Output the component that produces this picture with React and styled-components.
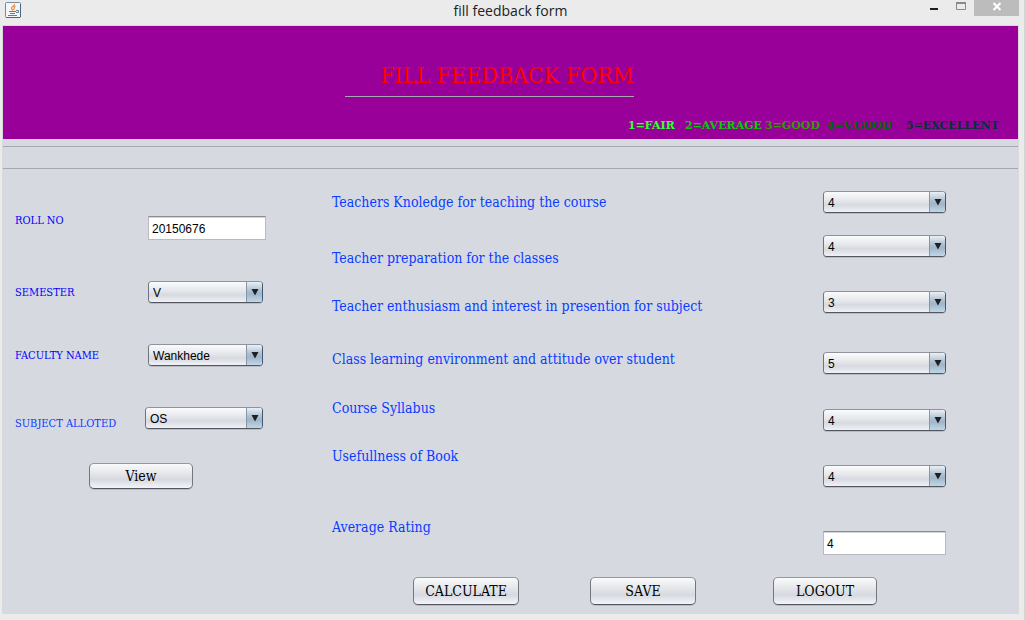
import React from "react";
import styled, { createGlobalStyle } from "styled-components";

const slab = '"DejaVu Serif Condensed", "DejaVu Serif", serif';
const wideSlab = '"DejaVu Serif", serif';
const sans = '"Liberation Sans", Arial, sans-serif';

const GlobalStyle = createGlobalStyle`
  *, *::before, *::after { box-sizing: border-box; }
  body { margin: 0; background: #ebebeb; font-family: ${sans}; }
`;

const Frame = styled.div`
  display: flex;
  flex-direction: column;
  min-height: 100vh;
  padding: 0 5px 6px 2px;
  border-right: 2px solid #d4d4d4;
  background: #ebebeb;
`;

const TitleBar = styled.header`
  display: grid;
  grid-template-columns: 1fr auto 1fr;
  height: 25px;
`;

const AppIcon = styled.svg`
  width: 16px;
  height: 16px;
  margin: 2px 0 0 3px;
`;

const WindowTitle = styled.div`
  font: 14px/22px "Open Sans", "Noto Sans", sans-serif;
  color: #222;
`;

const WindowControls = styled.div`
  display: flex;
  justify-content: flex-end;
  height: 16px;
`;

const WindowButton = styled.button`
  display: block;
  width: ${(p) => (p.$close ? 45 : 27)}px;
  height: 16px;
  padding: 0;
  border: 0;
  background: ${(p) => (p.$close ? "#bcbcbc" : "transparent")};
  svg { display: block; margin: 0 auto; }
`;

const Content = styled.main`
  flex: 1;
  display: flex;
  flex-direction: column;
  border: 1px solid #d9d9dc;
  border-bottom: 0;
  background: #d6d9e0;
`;

const Banner = styled.section`
  display: flex;
  flex-direction: column;
  justify-content: space-between;
  height: 113px;
  padding: 36px 0 6px;
  background: #990099;
`;

const HeadingRow = styled.div`
  display: grid;
  grid-template-columns: 342fr 289fr 384fr;
`;

const Heading = styled.h1`
  grid-column: 2;
  margin: 0;
  padding-bottom: 8px;
  border-bottom: 1px solid #a4a8b0;
  font: 23px/26px ${slab};
  color: #ff0000;
  text-align: right;
  white-space: nowrap;
`;

const Legend = styled.div`
  display: grid;
  grid-template-columns: 57px 80px 62px 79px 92px;
  justify-content: end;
  padding-right: 20px;
`;

const LegendItem = styled.span`
  font: bold 11px/14px ${wideSlab};
  color: ${(p) => p.$color};
  white-space: nowrap;
`;

const Strip = styled.div`
  height: 23px;
  margin-top: 7px;
  border: solid #a4a8b2;
  border-width: 1px 0;
`;

const Form = styled.form`
  display: grid;
  grid-template-columns: 329fr 491fr 195fr;
  padding-bottom: 9px;
`;

const StudentPanel = styled.section`
  display: grid;
  grid-template-columns: 133fr 184fr;
  align-content: start;
  padding-left: 12px;
`;

const Column = styled.div`
  display: flex;
  flex-direction: column;
  align-items: flex-start;
  padding-top: ${(p) => p.$top}px;
`;

const Label = styled.label`
  margin-bottom: ${(p) => p.$gap || 0}px;
  font: ${(p) => (p.$small ? "11px" : "14px")}/20px ${slab};
  color: ${(p) => (p.$light ? "#0a3cff" : "#0000ff")};
  white-space: nowrap;
`;

const Field = styled.input`
  width: ${(p) => p.$width}px;
  height: 24px;
  margin-bottom: ${(p) => p.$gap || 0}px;
  padding: 1px 3px 0;
  border: 1px solid #b8babf;
  border-top-color: #8b8d92;
  background: #fff;
  box-shadow: inset 0 1px 0 #d4d5d8;
  font: 12px ${sans};
  color: #000;
`;

const ComboBox = styled.span`
  position: relative;
  display: block;
  width: ${(p) => p.$width}px;
  height: 22px;
  margin-bottom: ${(p) => p.$gap || 0}px;
  margin-left: ${(p) => (p.$outdent ? -3 : 0)}px;
  border: 1px solid #6f747c;
  border-top-color: #8f939b;
  border-right-color: #3f5a72;
  border-bottom-color: #51565f;
  border-radius: 4px;
  box-shadow: 0 1px 0 #b9bcc3;
  overflow: hidden;

  select {
    appearance: none;
    display: block;
    width: 100%;
    height: 100%;
    padding: 2px 20px 0 4px;
    border: 0;
    background: linear-gradient(#fbfbfc, #e4e6ea 45%, #d6d9df 65%, #f0f2f8);
    font: 12px ${sans};
    color: #000;
  }
`;

const Arrow = styled.span`
  position: absolute;
  inset: 0 0 0 auto;
  width: 16px;
  border-left: 1px solid #8397a9;
  background: linear-gradient(#eaf0f5, #abbdce 45%, #a2b5c8 60%, #bfd7ea);
  pointer-events: none;
  svg { display: block; margin: 6px 0 0 4px; }
`;

const Button = styled.button`
  width: ${(p) => p.$width}px;
  height: ${(p) => p.$height || 28}px;
  padding: 0;
  border: 1px solid #74777e;
  border-top-color: #95989f;
  border-bottom-color: #53565d;
  border-radius: 5px;
  background: linear-gradient(#fafafb, #e4e6e9 40%, #d6d9df 65%, #f3f5fb);
  box-shadow: 0 1px 0 #b9bcc3;
  font: 14px ${slab};
  color: #000;
`;

const ViewRow = styled.div`
  grid-column: 1 / -1;
  padding: 29px 0 0 74px;
`;

const Actions = styled.div`
  grid-column: 1 / -1;
  display: grid;
  grid-template-columns: 177fr 183fr 245fr;
  padding: 22px 0 0 40.4%;
`;

const JavaIcon = () => (
  <AppIcon viewBox="0 0 16 16" aria-label="Java">
    <rect x="0.5" y="0.5" width="15" height="15" rx="1" fill="#f4f5f7" stroke="#6f8da5" />
    <path d="M1 15.5h14M15.5 2v13" stroke="#47657c" fill="none" />
    <path d="M9.5 2C10 4 6 5 6.5 6.500S8 7.500 7.500 8.500M10.500 4C8 5.500 10 6 8.500 8" stroke="#ee8434" strokeWidth="1.200" fill="none" />
    <path d="M4 9.500h7M5 11.500h5M3 13.500h9M11 8.500h2.500v2H11" stroke="#5f7f99" fill="none" />
  </AppIcon>
);

function Combo({ id, value, options, width, gap, outdent }) {
  return (
    <ComboBox $width={width} $gap={gap} $outdent={outdent}>
      <select id={id} defaultValue={value}>
        {options.map((o) => <option key={o}>{o}</option>)}
      </select>
      <Arrow>
        <svg width="8" height="8" viewBox="0 0 8 8"><path d="M0.500 1h7L4 7.500z" fill="#1d2024" /></svg>
      </Arrow>
    </ComboBox>
  );
}

const legend = [
  ["1=FAIR", "#33ff33"],
  ["2=AVERAGE", "#00cc00"],
  ["3=GOOD", "#339900"],
  ["4=V.GOOD", "#006600"],
  ["5=EXCELLENT", "#003333"],
];

const questions = [
  { id: "q1", text: "Teachers Knoledge for teaching the course", gap: 36, value: "4", controlGap: 22 },
  { id: "q2", text: "Teacher preparation for the classes", gap: 28, value: "4", controlGap: 34 },
  { id: "q3", text: "Teacher enthusiasm and interest in presention for subject", gap: 33, value: "3", controlGap: 39 },
  { id: "q4", text: "Class learning environment and attitude over student", gap: 29, value: "5", controlGap: 35 },
  { id: "q5", text: "Course Syllabus", gap: 28, value: "4", controlGap: 34 },
  { id: "q6", text: "Usefullness of Book", gap: 51, value: "4", controlGap: 44 },
];

const ratings = ["1", "2", "3", "4", "5"];

export default function App() {
  return (
    <>
      <GlobalStyle />
      <Frame>
        <TitleBar>
          <JavaIcon />
          <WindowTitle>fill feedback form</WindowTitle>
          <WindowControls>
            <WindowButton aria-label="Minimize">
              <svg width="8" height="16"><path d="M0 9h8" stroke="#1c1c1c" strokeWidth="2" /></svg>
            </WindowButton>
            <WindowButton aria-label="Maximize">
              <svg width="10" height="16"><path d="M0.500 2.500v7h9v-7" stroke="#8a8a8a" fill="none" /><path d="M0 3h10" stroke="#8a8a8a" strokeWidth="2" /></svg>
            </WindowButton>
            <WindowButton $close aria-label="Close">
              <svg width="8" height="16"><path d="M0.500 3l7 7M7.500 3l-7 7" stroke="#fff" strokeWidth="2" /></svg>
            </WindowButton>
          </WindowControls>
        </TitleBar>
        <Content>
          <Banner>
            <HeadingRow><Heading>FILL FEEDBACK FORM</Heading></HeadingRow>
            <Legend>
              {legend.map(([text, color]) => <LegendItem key={text} $color={color}>{text}</LegendItem>)}
            </Legend>
          </Banner>
          <Strip />
          <Form onSubmit={(e) => e.preventDefault()}>
            <StudentPanel>
              <Column $top={42}>
                <Label $small htmlFor="roll" $gap={52}>ROLL NO</Label>
                <Label $small htmlFor="semester" $gap={43}>SEMESTER</Label>
                <Label $small htmlFor="faculty" $gap={48}>FACULTY NAME</Label>
                <Label $small $light htmlFor="subject">SUBJECT ALLOTED</Label>
              </Column>
              <Column $top={47}>
                <Field id="roll" defaultValue="20150676" $width={118} $gap={41} />
                <Combo id="semester" value="V" options={["I", "II", "III", "IV", "V", "VI"]} width={115} gap={41} />
                <Combo id="faculty" value="Wankhede" options={["Wankhede"]} width={115} gap={41} />
                <Combo id="subject" value="OS" options={["OS"]} width={118} outdent />
              </Column>
              <ViewRow><Button type="button" $width={104} $height={26}>View</Button></ViewRow>
            </StudentPanel>
            <Column $top={23}>
              {questions.map((q) => (
                <Label key={q.id} htmlFor={q.id} $light $gap={q.gap}>{q.text}</Label>
              ))}
              <Label htmlFor="average" $light>Average Rating</Label>
            </Column>
            <Column $top={22}>
              {questions.map((q) => (
                <Combo key={q.id} id={q.id} value={q.value} options={ratings} width={123} gap={q.controlGap} />
              ))}
              <Field id="average" defaultValue="4" $width={123} />
            </Column>
            <Actions>
              <Button type="button" $width={106}>CALCULATE</Button>
              <Button type="submit" $width={106}>SAVE</Button>
              <Button type="button" $width={104}>LOGOUT</Button>
            </Actions>
          </Form>
        </Content>
      </Frame>
    </>
  );
}
